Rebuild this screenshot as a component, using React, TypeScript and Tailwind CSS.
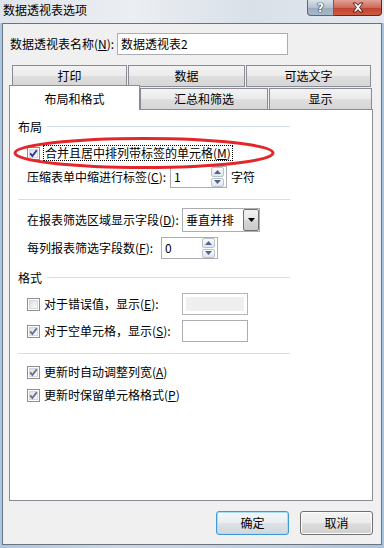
import React from 'react';

function CheckBox({ checked, tone = 'gray' }: { checked?: boolean; tone?: 'blue' | 'gray' }) {
  return (
    <span className="relative h-[13px] w-[13px] shrink-0 border border-[#8f8f8f] bg-white">
      <span className="absolute inset-[1px] border border-[#d4d7db] bg-[linear-gradient(135deg,#dedede,#fbfbfb)]" />
      {checked && (
        <svg viewBox="0 0 11 11" className="absolute left-0 top-0 h-[11px] w-[11px]">
          <path
            d="M2.2 5.4 L4.4 8 L8.8 2.2"
            fill="none"
            stroke={tone === 'blue' ? '#23379a' : '#66719a'}
            strokeWidth="1.9"
          />
        </svg>
      )}
    </span>
  );
}

function SpinBox({ value, w }: { value: string; w: string }) {
  return (
    <div className={`flex h-[22px] ${w} items-center border border-[#abadb3] bg-white pl-[3px] pr-[2px]`}>
      <span className="flex-1 leading-[16px]">{value}</span>
      <div className="flex h-[20px] w-[13px] flex-col gap-[1px]">
        <div className="flex flex-1 items-center justify-center rounded-[2px] border border-[#b9c1cb] bg-[linear-gradient(#fbfbfb,#e2e5ea)]">
          <svg viewBox="0 0 7 4" className="h-[4px] w-[7px]">
            <path d="M0 4 L3.5 0 L7 4 Z" fill="#4f6494" />
          </svg>
        </div>
        <div className="flex flex-1 items-center justify-center rounded-[2px] border border-[#b9c1cb] bg-[linear-gradient(#fbfbfb,#e2e5ea)]">
          <svg viewBox="0 0 7 4" className="h-[4px] w-[7px]">
            <path d="M0 0 L3.5 4 L7 0 Z" fill="#4f6494" />
          </svg>
        </div>
      </div>
    </div>
  );
}

function GroupHeader({ label }: { label: string }) {
  return (
    <div className="flex h-[16px] w-[272px] items-center">
      <span className="leading-[16px]">{label}</span>
      <div className="ml-[5px] mt-[-2px] h-px flex-1 bg-[#d5dfe5]" />
    </div>
  );
}

function Button({ label, primary }: { label: string; primary?: boolean }) {
  return (
    <button
      className={
        primary
          ? 'flex h-[24px] w-[73px] items-center justify-center rounded-[3px] border border-[#3c9ad6] bg-[linear-gradient(#f4f8fb_0%,#eaeef2_48%,#dce2e7_52%,#d0d7dd_100%)] shadow-[inset_0_0_0_1px_#a9dcf6] leading-[16px]'
          : 'flex h-[24px] w-[73px] items-center justify-center rounded-[3px] border border-[#707070] bg-[linear-gradient(#f3f3f3_0%,#ebebeb_48%,#dddddd_52%,#cfcfcf_100%)] shadow-[inset_0_0_0_1px_#fcfcfc] leading-[16px]'
      }
    >
      {label}
    </button>
  );
}

const tabBg = 'bg-[linear-gradient(#f3f3f3_0%,#ebebeb_48%,#dedede_52%,#d6d6d6_100%)]';

export default function App() {
  return (
    <div className="flex h-[548px] w-[384px] flex-col overflow-hidden bg-[linear-gradient(90deg,#a9c7e6,#c9d8e6_30%,#bcd0e4_70%,#a7c4e2)] font-['Noto_Sans_CJK_SC','Microsoft_YaHei',sans-serif] text-[12px] text-black">
      {/* title bar */}
      <div className="flex h-[23px] shrink-0 items-start justify-between bg-[linear-gradient(90deg,#dfe5ec,#ebeef2_35%,#d9e0e8_65%,#e3e8ee)]">
        <span className="pl-[3px] pt-[2px] leading-[16px]">数据透视表选项</span>
        <div className="mr-[2px] flex h-[16px]">
          <div className="flex w-[27px] items-center justify-center rounded-bl-[4px] border border-t-0 border-[#5d6672] bg-[linear-gradient(#d9e1ea,#b4c1cf_50%,#9aabbd_51%,#a9b8c8)]">
            <span className="font-['DejaVu_Sans',sans-serif] text-[12px] font-bold leading-[14px] text-white [text-shadow:0_0_1px_#1d2733,0_0_1px_#1d2733,0_0_1px_#1d2733]">
              ?
            </span>
          </div>
          <div className="flex w-[48px] items-center justify-center rounded-br-[4px] border border-l-0 border-t-0 border-[#5a2a26] bg-[linear-gradient(#e2a196,#cf6a5b_50%,#c0412f_51%,#cf5c45)]">
            <svg viewBox="0 0 14 11" className="h-[11px] w-[14px]">
              <path
                d="M2 1 L5 1 L7 3.3 L9 1 L12 1 L8.6 5.5 L12 10 L9 10 L7 7.7 L5 10 L2 10 L5.4 5.5 Z"
                fill="#ffffff"
                stroke="#3b1a17"
                strokeWidth="0.9"
                strokeLinejoin="round"
              />
            </svg>
          </div>
        </div>
      </div>

      {/* window body */}
      <div className="mx-[2px] mb-[3px] flex flex-1 flex-col border border-[#6e737a] bg-[#f0f0f0] pl-[6px] pr-[8px]">
        {/* name row */}
        <div className="mt-[9px] flex h-[22px] items-center pl-[1px]">
          <span className="w-[107px] shrink-0 leading-[16px]">
            数据透视表名称(<u>N</u>):
          </span>
          <div className="flex h-[22px] w-[171px] items-center border border-[#abadb3] bg-white pl-[3px] leading-[16px]">
            数据透视表2
          </div>
        </div>

        {/* tabs back row */}
        <div className="mt-[10px] flex h-[22px] gap-[1px] pl-[3px]">
          <div className={`flex w-[115px] items-center justify-center border border-[#898c95] ${tabBg} leading-[16px]`}>打印</div>
          <div className={`flex w-[117px] items-center justify-center border border-[#898c95] ${tabBg} leading-[16px]`}>数据</div>
          <div className={`flex w-[125px] items-center justify-center border border-[#898c95] ${tabBg} leading-[16px]`}>可选文字</div>
        </div>

        {/* tabs front row */}
        <div className="flex h-[22px] items-end">
          <div className="relative z-10 -mb-[1px] flex h-[25px] w-[131px] items-center justify-center self-start -mt-[2px] border border-b-0 border-[#898c95] bg-white pt-[1px] leading-[16px]">
            布局和格式
          </div>
          <div className={`flex h-[21px] w-[128px] items-center justify-center border border-b-0 border-[#898c95] ${tabBg} leading-[16px]`}>
            汇总和筛选
          </div>
          <div className={`ml-[1px] flex h-[21px] w-[103px] items-center justify-center border border-b-0 border-[#898c95] ${tabBg} leading-[16px]`}>
            显示
          </div>
        </div>

        {/* tab panel */}
        <div className="relative flex h-[392px] flex-col border border-[#898c95] bg-white pl-[8px]">
          <div className="mt-[9px]">
            <GroupHeader label="布局" />
          </div>

          <div className="mt-[9px] flex h-[18px] items-center pl-[9px]">
            <CheckBox checked tone="blue" />
            <span className="ml-[3px] border border-dotted border-black px-[1px] leading-[14px]">
              合并且居中排列带标签的单元格(<u>M</u>)
            </span>
          </div>

          <div className="mt-[3px] flex h-[24px] items-center pl-[9px]">
            <span className="w-[143px] shrink-0 leading-[16px]">
              压缩表单中缩进行标签(<u>C</u>):
            </span>
            <SpinBox value="1" w="w-[57px]" />
            <span className="ml-[4px] leading-[16px]">字符</span>
          </div>

          <div className="mt-[10px] h-px w-[272px] bg-[#d5dfe5]" />

          <div className="mt-[8px] flex h-[24px] items-center pl-[9px]">
            <span className="w-[155px] shrink-0 leading-[16px]">
              在报表筛选区域显示字段(<u>D</u>):
            </span>
            <div className="flex h-[24px] w-[78px] items-stretch border border-[#abadb3] bg-white">
              <span className="flex flex-1 items-center pl-[3px] leading-[16px]">垂直并排</span>
              <div className="flex w-[16px] items-center justify-center rounded-[2px] border border-[#707070] bg-[linear-gradient(#f2f2f2,#e6e6e6_50%,#d6d6d6_51%,#cacaca)]">
                <svg viewBox="0 0 7 4" className="h-[4px] w-[7px]">
                  <path d="M0 0 L3.5 4 L7 0 Z" fill="#000000" />
                </svg>
              </div>
            </div>
          </div>

          <div className="mt-[4px] flex h-[24px] items-center pl-[9px]">
            <span className="w-[134px] shrink-0 leading-[16px]">
              每列报表筛选字段数(<u>F</u>):
            </span>
            <SpinBox value="0" w="w-[57px]" />
          </div>

          <div className="mt-[10px]">
            <GroupHeader label="格式" />
          </div>

          <div className="mt-[7px] flex h-[22px] items-center pl-[9px]">
            <CheckBox />
            <span className="ml-[4px] w-[138px] shrink-0 leading-[16px]">
              对于错误值，显示(<u>E</u>):
            </span>
            <div className="h-[22px] w-[66px] border border-[#b4b4b4] bg-white p-[3px]">
              <div className="h-full w-full bg-[#efefef]" />
            </div>
          </div>

          <div className="mt-[5px] flex h-[22px] items-center pl-[9px]">
            <CheckBox checked />
            <span className="ml-[4px] w-[138px] shrink-0 leading-[16px]">
              对于空单元格，显示(<u>S</u>):
            </span>
            <div className="h-[22px] w-[66px] border border-[#abadb3] bg-white" />
          </div>

          <div className="mt-[11px] h-px w-[272px] bg-[#d5dfe5]" />

          <div className="mt-[9px] flex h-[18px] items-center pl-[9px]">
            <CheckBox checked />
            <span className="ml-[4px] leading-[16px]">
              更新时自动调整列宽(<u>A</u>)
            </span>
          </div>

          <div className="mt-[5px] flex h-[18px] items-center pl-[9px]">
            <CheckBox checked />
            <span className="ml-[4px] leading-[16px]">
              更新时保留单元格格式(<u>P</u>)
            </span>
          </div>

          {/* red annotation ellipse */}
          <svg viewBox="0 0 300 80" className="pointer-events-none absolute left-0 top-0 h-[80px] w-[300px]">
            <ellipse cx="134" cy="43" rx="129" ry="14.5" fill="none" stroke="#e4262b" strokeWidth="3" />
          </svg>
        </div>

        {/* buttons */}
        <div className="mt-[10px] flex h-[24px] justify-end gap-[11px]">
          <Button label="确定" primary />
          <Button label="取消" />
        </div>
      </div>
    </div>
  );
}
